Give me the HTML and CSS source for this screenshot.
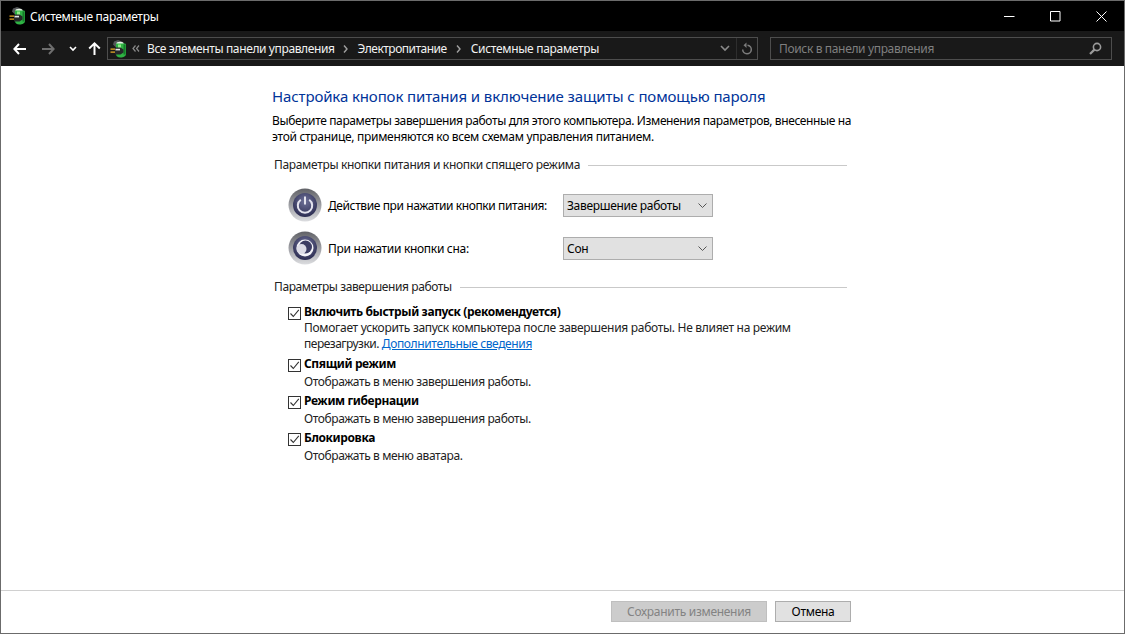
FILE: index.html
```html
<!DOCTYPE html>
<html lang="ru">
<head>
<meta charset="utf-8">
<title>Системные параметры</title>
<link rel="stylesheet" href="styles.css">
</head>
<body>
<svg class="defs" width="0" height="0" aria-hidden="true">
  <defs>
    <symbol id="battery" viewBox="0 0 18 18">
      <path d="M4 1.500L8 0l4 1.500 2 2-2 3-6 1-3-3z" fill="#55585a"/>
      <ellipse cx="10" cy="3.400" rx="3.600" ry="1.600" fill="#e8f5e6"/>
      <path d="M6 3.400h8.500c1 0 1.500.7 1.500 1.500v9c0 2-2.500 3.600-5.500 3.600S6 16 6 14z" fill="#2fb344"/>
      <rect x="8" y="4.500" width="3" height="3.500" fill="#8eea86"/>
      <rect x="13.500" y="4.500" width="2" height="10" fill="#157a28"/>
      <path d="M5 7.500h5.500l3 2v3l-3 2H5z" fill="#26282a"/>
      <rect x="5.500" y="8.800" width="4.500" height="1.600" fill="#e4e6e6"/>
      <rect x="0.500" y="8.500" width="4.500" height="1.200" fill="#f3b32a"/>
      <rect x="0.500" y="11.500" width="4.500" height="1.200" fill="#f3b32a"/>
    </symbol>
    <radialGradient id="disc" cx="50%" cy="35%" r="65%">
      <stop offset="0" stop-color="#6f7299"/>
      <stop offset="1" stop-color="#2c2d52"/>
    </radialGradient>
    <linearGradient id="rim" x1="0" y1="0" x2="0" y2="1">
      <stop offset="0" stop-color="#606166"/>
      <stop offset=".55" stop-color="#a4a5aa"/>
      <stop offset="1" stop-color="#dcdde0"/>
    </linearGradient>
  </defs>
</svg>
<div class="window">
  <header class="titlebar">
    <svg class="title-icon"><use href="#battery"/></svg>
    <span class="title-text">Системные параметры</span>
    <div class="caption">
      <button class="cap-btn" aria-label="Свернуть"><svg width="11" height="11" viewBox="0 0 11 11"><path d="M0 5.500h10.500" stroke="#fff" fill="none"/></svg></button>
      <button class="cap-btn" aria-label="Развернуть"><svg width="11" height="11" viewBox="0 0 11 11"><path d="M.5.5h9.500v9.500H.5z" stroke="#fff" fill="none"/></svg></button>
      <button class="cap-btn" aria-label="Закрыть"><svg width="11" height="11" viewBox="0 0 11 11"><path d="M.5.5l10 10M10.500.5l-10 10" stroke="#fff" fill="none"/></svg></button>
    </div>
  </header>
  <nav class="navbar">
    <svg class="nav-arrow" width="13" height="12" viewBox="0 0 13 12"><path d="M6 1L1.400 6 6 11M2 6h11" stroke="#fff" stroke-width="2" fill="none"/></svg>
    <svg class="nav-arrow dim" width="13" height="12" viewBox="0 0 13 12"><path d="M7 1l4.600 5L7 11M11 6H0" stroke="#6e6e6e" stroke-width="2" fill="none"/></svg>
    <svg class="nav-drop" width="8" height="6" viewBox="0 0 8 6"><path d="M1 1l3 3 3-3" stroke="#fff" stroke-width="1.600" fill="none"/></svg>
    <svg class="nav-up" width="13" height="13" viewBox="0 0 13 13"><path d="M1.200 6.500L6.500 1.400l5.300 5.100M6.500 2v11" stroke="#fff" stroke-width="2" fill="none"/></svg>
    <div class="address">
      <svg class="addr-icon"><use href="#battery"/></svg>
      <svg class="chev-double" width="8" height="7" viewBox="0 0 8 7"><path d="M3.500.5L1 3.500l2.500 3M7 .5L4.500 3.500l2.500 3" stroke="#8a8a8a" stroke-width="1.200" fill="none"/></svg>
      <span class="crumb crumb-first">Все элементы панели управления</span>
      <svg class="sep" width="5" height="8" viewBox="0 0 5 8"><path d="M1 .5L4 4 1 7.500" stroke="#a0a0a0" stroke-width="1.400" fill="none"/></svg>
      <span class="crumb crumb-mid">Электропитание</span>
      <svg class="sep sep-last" width="5" height="8" viewBox="0 0 5 8"><path d="M1 .5L4 4 1 7.500" stroke="#a0a0a0" stroke-width="1.400" fill="none"/></svg>
      <span class="crumb">Системные параметры</span>
      <svg class="addr-drop" width="10" height="7" viewBox="0 0 10 7"><path d="M1 1l4 4 4-4" stroke="#8a8a8a" stroke-width="1.600" fill="none"/></svg>
      <span class="addr-divider"></span>
      <svg class="addr-refresh" width="12" height="14" viewBox="0 0 12 14"><path d="M6.500 3.300a4.300 4.300 0 1 1-4.800 4.300" stroke="#7c7c7c" stroke-width="1.500" fill="none"/><path d="M5.500.5v5.500L2.500 3.300z" fill="#7c7c7c"/></svg>
    </div>
    <div class="search">
      <span class="search-text">Поиск в панели управления</span>
      <svg width="13" height="13" viewBox="0 0 13 13"><circle cx="8" cy="5" r="3.600" stroke="#9a9a9a" stroke-width="1.600" fill="none"/><path d="M5.400 7.600L1 12" stroke="#9a9a9a" stroke-width="2.200"/></svg>
    </div>
  </nav>
  <main class="content">
    <div class="panel">
      <h1 class="heading">Настройка кнопок питания и включение защиты с помощью пароля</h1>
      <p class="intro">Выберите параметры завершения работы для этого компьютера. Изменения параметров, внесенные на <span class="intro-end">этой странице, применяются ко всем схемам управления питанием.</span></p>
      <div class="group-title first"><span>Параметры кнопки питания и кнопки спящего режима</span></div>
      <div class="setting">
        <svg class="round-icon" viewBox="0 0 34 34">
          <circle cx="17" cy="17" r="16.500" fill="url(#rim)"/>
          <circle cx="17" cy="17" r="12" fill="url(#disc)"/>
          <path d="M12.800 11.800a7.200 7.200 0 1 0 8.400 0" stroke="#e4e4ee" stroke-width="2" fill="none"/>
          <path d="M17 8.500v8" stroke="#e4e4ee" stroke-width="2"/>
        </svg>
        <span class="setting-label">Действие при нажатии кнопки питания:</span>
        <div class="select"><span>Завершение работы</span><svg width="9" height="5" viewBox="0 0 9 5"><path d="M.5.5l4 4 4-4" stroke="#555" fill="none"/></svg></div>
      </div>
      <div class="setting">
        <svg class="round-icon" viewBox="0 0 34 34">
          <circle cx="17" cy="17" r="16.500" fill="url(#rim)"/>
          <circle cx="17" cy="17" r="12" fill="url(#disc)"/>
          <circle cx="17" cy="17" r="8.500" fill="#f4f4f8"/>
          <circle cx="17.500" cy="16" r="6.500" fill="#3c3d63"/>
          <circle cx="13.500" cy="18" r="5" fill="#dcdce6"/>
        </svg>
        <span class="setting-label wide">При нажатии кнопки сна:</span>
        <div class="select"><span>Сон</span><svg width="9" height="5" viewBox="0 0 9 5"><path d="M.5.5l4 4 4-4" stroke="#555" fill="none"/></svg></div>
      </div>
      <div class="group-title second"><span>Параметры завершения работы</span></div>
      <div class="option option-first">
        <span class="check"><svg width="11" height="11" viewBox="0 0 11 11"><path d="M1.500 5.500l2.800 3L9.800 1.800" stroke="#333" stroke-width="1.100" fill="none"/></svg></span>
        <div class="option-body">
          <div class="option-title">Включить быстрый запуск (рекомендуется)</div>
          <div class="option-desc">Помогает ускорить запуск компьютера после завершения работы. Не влияет на режим <span class="tight">перезагрузки.</span> <a class="link" href="#">Дополнительные сведения</a></div>
        </div>
      </div>
      <div class="option">
        <span class="check"><svg width="11" height="11" viewBox="0 0 11 11"><path d="M1.500 5.500l2.800 3L9.800 1.800" stroke="#333" stroke-width="1.100" fill="none"/></svg></span>
        <div class="option-body">
          <div class="option-title">Спящий режим</div>
          <div class="option-desc short">Отображать в меню завершения работы.</div>
        </div>
      </div>
      <div class="option">
        <span class="check"><svg width="11" height="11" viewBox="0 0 11 11"><path d="M1.500 5.500l2.800 3L9.800 1.800" stroke="#333" stroke-width="1.100" fill="none"/></svg></span>
        <div class="option-body">
          <div class="option-title">Режим гибернации</div>
          <div class="option-desc short">Отображать в меню завершения работы.</div>
        </div>
      </div>
      <div class="option">
        <span class="check"><svg width="11" height="11" viewBox="0 0 11 11"><path d="M1.500 5.500l2.800 3L9.800 1.800" stroke="#333" stroke-width="1.100" fill="none"/></svg></span>
        <div class="option-body">
          <div class="option-title">Блокировка</div>
          <div class="option-desc short">Отображать в меню аватара.</div>
        </div>
      </div>
    </div>
  </main>
  <footer class="footer">
    <button class="btn disabled">Сохранить изменения</button>
    <button class="btn">Отмена</button>
  </footer>
</div>
</body>
</html>
```
FILE: styles.css
```css
* { box-sizing: border-box; }
html, body { margin: 0; padding: 0; }
body {
  width: 1125px;
  height: 634px;
  overflow: hidden;
  background: #fff;
  font-family: "Noto Sans", "Open Sans", sans-serif;
  font-size: 12px;
  letter-spacing: -.3px;
  color: #000;
}
.defs { position: absolute; }
.window {
  width: 1125px;
  height: 634px;
  display: flex;
  flex-direction: column;
  border: 1px solid #6b6b6b;
  background: #fff;
}
.titlebar {
  height: 30px;
  flex: none;
  background: #000;
  display: flex;
  align-items: center;
  color: #fff;
}
.title-icon { width: 18px; height: 18px; margin-left: 8px; }
.title-text { margin-left: 3px; }
.caption { margin-left: auto; display: flex; }
.cap-btn {
  width: 46px;
  height: 30px;
  padding: 0;
  border: 0;
  background: none;
  display: flex;
  align-items: center;
  justify-content: center;
}
.navbar {
  height: 35px;
  flex: none;
  background: #191919;
  display: flex;
  align-items: center;
  color: #fff;
}
.nav-arrow { margin-left: 12px; }
.nav-arrow.dim { margin-left: 16px; }
.nav-drop { margin-left: 14px; }
.nav-up { margin-left: 11px; }
.address {
  width: 651px;
  height: 23px;
  margin-left: 6px;
  border: 1px solid #4d4d4d;
  display: flex;
  align-items: center;
}
.addr-icon { width: 18px; height: 18px; margin-left: 2px; }
.chev-double { margin-left: 4px; }
.crumb { margin-left: 8px; color: #f2f2f2; white-space: nowrap; }
.crumb-first { margin-left: 7px; letter-spacing: -.38px; }
.crumb-mid { letter-spacing: -.5px; }
.sep { margin-left: 8px; margin-right: 2px; }
.sep-last { margin-left: 9px; }
.addr-drop { margin-left: auto; }
.addr-divider { width: 1px; height: 21px; margin-left: 6px; background: #2e2e2e; }
.addr-refresh { margin-left: 4px; margin-right: 4px; }
.search {
  width: 342px;
  height: 23px;
  margin-left: 12px;
  border: 1px solid #4d4d4d;
  display: flex;
  align-items: center;
  justify-content: space-between;
  padding: 0 9px 0 8px;
}
.search-text { color: #7f7f7f; letter-spacing: -.35px; }
.content { flex: 1; min-height: 0; padding: 20px 0 0 271px; }
.panel { width: 582px; }
.heading {
  margin: 0;
  font-size: 15px;
  font-weight: 400;
  letter-spacing: -.12px;
  line-height: 20px;
  color: #003399;
  white-space: nowrap;
}
.intro { margin: 7px 0 0; line-height: 16px; letter-spacing: -.38px; }
.intro-end { letter-spacing: -.3px; }
.group-title {
  display: flex;
  align-items: center;
  gap: 8px;
  width: 575px;
  padding-left: 2px;
  line-height: 16px;
  color: #222;
  letter-spacing: -.33px;
}
.group-title::after { content: ""; flex: 1; height: 1px; background: #c9c9c9; }
.group-title.first { margin-top: 12px; margin-bottom: 15px; }
.group-title.second { margin-top: 14px; margin-bottom: 8px; letter-spacing: -.4px; }
.setting {
  height: 34px;
  margin-bottom: 9px;
  margin-left: 16px;
  display: flex;
  align-items: center;
}
.round-icon { width: 34px; height: 34px; flex: none; }
.setting-label { width: 235px; margin-left: 6px; letter-spacing: -.4px; white-space: nowrap; }
.setting-label.wide { letter-spacing: -.3px; }
.select {
  width: 150px;
  height: 23px;
  background: #e1e1e1;
  border: 1px solid #adadad;
  display: flex;
  align-items: center;
  justify-content: space-between;
  padding: 0 3px;
}
.select svg { margin-right: 2px; }
.option { display: flex; margin-left: 16px; margin-bottom: 4px; }
.option-first { margin-bottom: 3px; }
.check {
  width: 13px;
  height: 13px;
  flex: none;
  margin-top: 4px;
  border: 1px solid #333;
  background: #fff;
  display: flex;
}
.option-body { margin-left: 3px; width: 500px; }
.option-title { font-weight: 700; line-height: 17px; letter-spacing: -.38px; }
.option-desc { line-height: 16px; color: #222; }
.option-desc.short { margin-top: 2px; margin-bottom: -2px; letter-spacing: -.38px; }
.tight { letter-spacing: -.5px; }
.link { color: #0066cc; letter-spacing: -.38px; }
.footer {
  height: 43px;
  flex: none;
  border-top: 1px solid #d0d0d0;
  display: flex;
  justify-content: flex-end;
  align-items: flex-start;
  gap: 8px;
  padding: 10px 273px 0 0;
}
.btn {
  height: 21px;
  padding: 0;
  width: 76px;
  font: inherit;
  letter-spacing: inherit;
  background: #e1e1e1;
  border: 1px solid #adadad;
  color: #000;
}
.btn.disabled { width: 156px; background: #cccccc; border-color: #bfbfbf; color: #838383; }
```
